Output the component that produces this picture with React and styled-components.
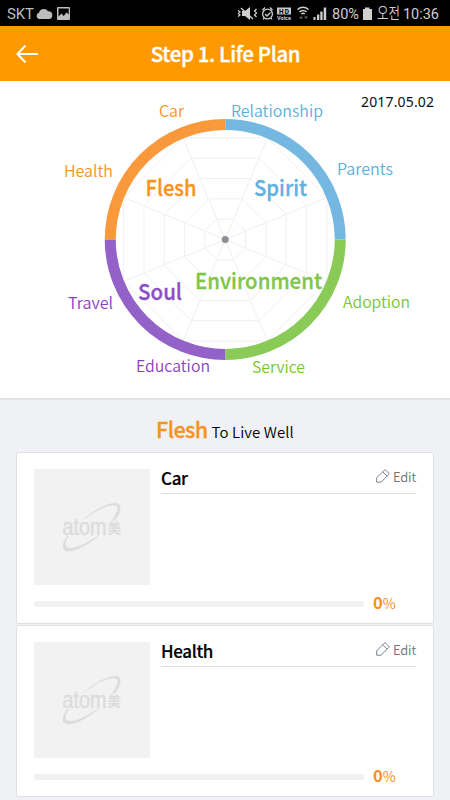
import styled, { createGlobalStyle } from "styled-components";

const GlobalStyle = createGlobalStyle`
    * {
        box-sizing: border-box;
    }
    body {
        margin: 0;
        background: #eff1f4;
        font-family: "Noto Sans CJK KR", "Noto Sans", sans-serif;
        overflow: hidden;
    }
`
const Screen = styled.div`
    width: 450px;
    height: 800px;
    overflow: hidden;
`
const StatusBar = styled.div`
    display: flex;
    justify-content: space-between;
    height: 26px;
    background: #000000;
    & svg{
        display: block;
    }
`
const Header = styled.header`
    display: grid;
    grid-template-columns: 54px 1fr 54px;
    align-items: center;
    height: 55px;
    background: #ff9900;
    & h1{
        margin: 0;
        padding-left: 1px;
        font-size: 20.5px;
        font-weight: 500;
        letter-spacing: -0.35px;
        line-height: 55px;
        text-align: center;
        white-space: nowrap;
        color: #ffffff;
        -webkit-text-stroke: 0.4px #ffffff;
    }
`
const BackButton = styled.button`
    height: 55px;
    padding: 0 0 0 16px;
    border: 0;
    background: none;
    & svg{
        display: block;
    }
`
const ChartPanel = styled.section`
    height: 319px;
    background: #ffffff;
    border-bottom: 2px solid #e1e2e4;
    & svg{
        display: block;
    }
`
const SectionTitle = styled.h2`
    display: flex;
    justify-content: center;
    align-items: baseline;
    gap: 4px;
    height: 52px;
    margin: 0;
    padding-top: 13px;
    font-size: 15px;
    font-weight: 350;
    letter-spacing: 0.1px;
    line-height: 32px;
    color: #000000;
    & strong{
        font-size: 21.5px;
        font-weight: 500;
        letter-spacing: -0.6px;
        color: #f7931e;
        -webkit-text-stroke: 0.3px #f7931e;
    }
`
const CardList = styled.div`
    display: flex;
    flex-direction: column;
    gap: 1px;
    padding: 0 16px;
`
const CardBox = styled.article`
    height: 172px;
    padding: 16px 17px 0;
    border: 1px solid #e0e1e3;
    border-radius: 2px;
    background: #ffffff;
`
const CardTop = styled.div`
    display: flex;
    gap: 11px;
`
const Thumb = styled.div`
    width: 116px;
    height: 116px;
    background: #f2f2f2;
    & svg{
        display: block;
    }
`
const CardHead = styled.div`
    display: flex;
    flex: 1;
    justify-content: space-between;
    height: 25px;
    border-bottom: 1px solid #dedede;
    & h3{
        margin: 0;
        font-size: 17px;
        font-weight: 500;
        letter-spacing: -0.35px;
        line-height: 18px;
        color: #000000;
        -webkit-text-stroke: 0.2px #000000;
    }
`
const EditButton = styled.button`
    display: flex;
    gap: 3px;
    height: 16px;
    padding: 0;
    border: 0;
    background: none;
    font-family: inherit;
    font-size: 13px;
    font-weight: 350;
    letter-spacing: -0.2px;
    line-height: 15px;
    color: #6e7480;
`
const Progress = styled.div`
    display: flex;
    align-items: center;
    gap: 9px;
    height: 20px;
    margin-top: 9px;
    font-size: 14px;
    line-height: 20px;
    color: #f78f1e;
    & span{
        margin-top: -3px;
    }
    & strong{
        font-size: 16.5px;
        font-weight: 700;
    }
`
const Track = styled.div`
    width: 330px;
    height: 6px;
    border-radius: 3px;
    background: #f0f1f3;
`
const Fill = styled.div`
    height: 100%;
    border-radius: 3px;
    background: #f78f1e;
`

const CX = 225.25
const CY = 158.5

const arcs = [
    { color: "#f9993b", d: `M${CX - 115} ${CY}A115 115 0 0 1 ${CX} ${CY - 115}` },
    { color: "#74b8e2", d: `M${CX} ${CY - 115}A115 115 0 0 1 ${CX + 115} ${CY}` },
    { color: "#8aca56", d: `M${CX + 115} ${CY}A115 115 0 0 1 ${CX} ${CY + 115}` },
    { color: "#9461c9", d: `M${CX} ${CY + 115}A115 115 0 0 1 ${CX - 115} ${CY}` },
]

const areas = [
    { name: "Flesh", x: 145.5, y: 115, width: 51, color: "#f7931e" },
    { name: "Spirit", x: 254, y: 115, width: 53, color: "#62b0de" },
    { name: "Soul", x: 138, y: 219, width: 44, color: "#8a50c4" },
    { name: "Environment", x: 195, y: 208, width: 127, color: "#7ec744" },
]

const labels = [
    { name: "Car", x: 159, y: 36, width: 25, color: "#f7931e" },
    { name: "Relationship", x: 231, y: 35.5, width: 92, color: "#5bb0e0" },
    { name: "Health", x: 64, y: 95.5, width: 49, color: "#f7931e" },
    { name: "Parents", x: 337, y: 94, width: 56, color: "#5bb0e0" },
    { name: "Travel", x: 68, y: 228, width: 45, color: "#8a3fc4" },
    { name: "Adoption", x: 343, y: 227, width: 67, color: "#75c62f" },
    { name: "Education", x: 136, y: 290.5, width: 74, color: "#8a3fc4" },
    { name: "Service", x: 252, y: 292, width: 53, color: "#75c62f" },
]

const corner = (radius, i) => {
    const angle = Math.PI / 8 + (i * Math.PI) / 4
    return [CX + radius * Math.cos(angle), CY + radius * Math.sin(angle)]
}
const corners = [0, 1, 2, 3, 4, 5, 6, 7]
const rings = [22, 44, 66, 88, 110]

const LifeWheel = () => (
    <svg width="450" height="317" viewBox="0 0 450 317">
        <g fill="none" stroke="#f0f0f0" strokeWidth="1">
            {rings.map((r) => (
                <polygon key={r} points={corners.map((i) => corner(r, i).join(",")).join(" ")} />
            ))}
            {corners.map((i) => {
                const [x, y] = corner(110, i)
                return <line key={i} x1={CX} y1={CY} x2={x} y2={y} />
            })}
        </g>
        {arcs.map((arc) => (
            <path key={arc.color} d={arc.d} fill="none" stroke={arc.color} strokeWidth="11" />
        ))}
        <circle cx={CX} cy={CY} r="3.5" fill="#8e9097" />
        <g fontSize="22" fontWeight="500" strokeWidth="0.3">
            {areas.map((a) => (
                <text key={a.name} x={a.x} y={a.y} textLength={a.width} lengthAdjust="spacingAndGlyphs" fill={a.color} stroke={a.color}>{a.name}</text>
            ))}
        </g>
        <g fontSize="16" fontWeight="350">
            {labels.map((l) => (
                <text key={l.name} x={l.x} y={l.y} textLength={l.width} lengthAdjust="spacingAndGlyphs" fill={l.color}>{l.name}</text>
            ))}
        </g>
        <text x="361" y="26" fontFamily="Noto Sans" fontSize="14" textLength="73" fill="#111111">2017.05.02</text>
    </svg>
)

const StatusLeft = () => (
    <svg width="80" height="26" viewBox="0 0 80 26" fill="#bdbdbd">
        <text x="7" y="19" fontFamily="Roboto" fontSize="15" textLength="27">SKT</text>
        <path d="M39 19a3.2 3.2 0 0 1 0-6.2a5 5 0 0 1 9-1.6a3.4 3.4 0 0 1 .8 7.8z" />
        <path fillRule="evenodd" d="M58 7h11q1 0 1 1v11q0 1-1 1h-11q-1 0-1-1v-11q0-1 1-1zM58.5 8.5v8l3-3l2.2 2.5l3-3.7l2 2.4v-6.2z" />
    </svg>
)

const StatusRight = () => (
    <svg width="215" height="26" viewBox="235 0 215 26" fill="#cfcfcf">
        <path d="M242 11h3l5-4v13l-5-4h-3z" />
        <path d="M241 8l12 11M238 10.5l2 1.5l-1.5 1.5l1.5 1.5l-2 1.5M256.5 9l-2 2l2 2l-2 2l2 2" fill="none" stroke="#cfcfcf" strokeWidth="1.3" />
        <g fill="none" stroke="#cfcfcf" strokeWidth="1.3">
            <circle cx="267.5" cy="14" r="4.9" />
            <path d="M262.5 10l2.5-2.5M272.5 10l-2.5-2.5M265 14l2 2l3.5-3.5M264 18l-1 1.5M271 18l1 1.5" />
        </g>
        <rect x="277" y="7.5" width="14" height="7" fill="#c7c7c7" />
        <text x="279" y="13.5" fontFamily="Roboto" fontSize="6.5" fontWeight="700" textLength="10" fill="#000000">HD</text>
        <text x="277" y="19.5" fontFamily="Roboto" fontSize="5.5" fontWeight="700" textLength="14">Voice</text>
        <g fill="none" stroke="#cfcfcf" strokeWidth="1.5">
            <path d="M297.5 9.5q5.5-4.5 11 0M299.5 11.8q3.5-2.8 7 0M301.3 14q1.7-1.3 3.4 0" />
        </g>
        <path d="M301 16l2 2.5h-4zM306 19l2-2.5h-4z" fill="#666666" />
        <path d="M313.5 20v-3h2v3zM317 20v-5.5h2.3v5.5zM320.3 20v-8.5h2.3v8.5zM323.7 20v-12.5h2.5v12.5z" />
        <text x="332" y="19" fontFamily="Roboto" fontSize="15.5" textLength="27" lengthAdjust="spacingAndGlyphs">80%</text>
        <path d="M365 7.5h4.5v1.5h2.5v11h-9v-11h2z" />
        <text x="377" y="19" fontSize="15.5" fontWeight="350" textLength="23" lengthAdjust="spacingAndGlyphs">오전</text>
        <text x="403" y="19" fontFamily="Roboto" fontSize="15.5" textLength="36" lengthAdjust="spacingAndGlyphs">10:36</text>
    </svg>
)

const AtomLogo = () => (
    <svg width="116" height="116" viewBox="0 0 116 116" fill="#dcdcdc">
        <path d="M50 50C64 38 81 31 85 35.5C88 39 85 46 80.5 51.5L78.5 51C83 45 85.5 39.500 83 37C79 33.500 64 39.500 50 50z" stroke="#dcdcdc" strokeWidth="0.5" />
        <circle cx="83.3" cy="44.5" r="1.7" />
        <path d="M33.500 67C29 73 27.500 79 30.500 81C37 85 53 77 64 67C52 75 37 82 32.500 78C30.500 76 31.500 71.500 34.500 67z" stroke="#dcdcdc" strokeWidth="0.5" />
        <text x="28.5" y="65.500" fontFamily="Liberation Sans" fontSize="24" textLength="44" lengthAdjust="spacingAndGlyphs" stroke="#dcdcdc" strokeWidth="0.5">atom</text>
        <text x="73.5" y="64" fontSize="14" fontWeight="700" textLength="13.5" lengthAdjust="spacingAndGlyphs">美</text>
    </svg>
)

const PencilIcon = () => (
    <svg width="14" height="14" viewBox="0 0 14 14" fill="none" stroke="#7d838d" strokeWidth="1">
        <path d="M.7 13.2V8.8L8.2 1.2Q9 .4 9.8 1.2L12.6 4Q13.4 4.8 12.6 5.6L5 13.2zM6.8 2.8L11 7" />
    </svg>
)

const plans = [
    { title: "Car", percent: 0 },
    { title: "Health", percent: 0 },
]

const Card = ({ title, percent }) => (
    <CardBox>
        <CardTop>
            <Thumb><AtomLogo /></Thumb>
            <CardHead>
                <h3>{title}</h3>
                <EditButton><PencilIcon />Edit</EditButton>
            </CardHead>
        </CardTop>
        <Progress>
            <Track><Fill style={{ width: `${percent}%` }} /></Track>
            <span><strong>{percent}</strong>%</span>
        </Progress>
    </CardBox>
)

const App = () => (
    <Screen>
        <GlobalStyle />
        <StatusBar>
            <StatusLeft />
            <StatusRight />
        </StatusBar>
        <Header>
            <BackButton aria-label="Back">
                <svg width="23" height="20" viewBox="0 0 23 20" fill="none" stroke="#ffffff" strokeWidth="2">
                    <path d="M9.5 1.5L1.5 10L9.5 18.5M1.5 10H22" />
                </svg>
            </BackButton>
            <h1>Step 1. Life Plan</h1>
        </Header>
        <ChartPanel>
            <LifeWheel />
        </ChartPanel>
        <SectionTitle><strong>Flesh</strong>To Live Well</SectionTitle>
        <CardList>
            {plans.map((plan) => (
                <Card key={plan.title} title={plan.title} percent={plan.percent} />
            ))}
        </CardList>
    </Screen>
)

export default App
